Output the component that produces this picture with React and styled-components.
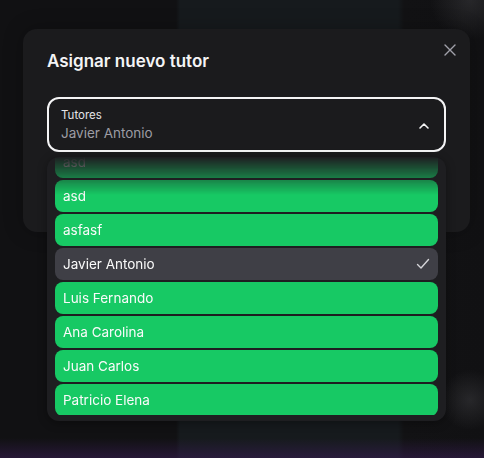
import React, { useEffect, useRef } from "react";
import styled, { createGlobalStyle } from "styled-components";

const Global = createGlobalStyle`
  html, body { margin: 0; padding: 0; }
  body {
    width: 484px; height: 458px; overflow: hidden;
    background: #111113;
    font-family: Inter, "Noto Sans", sans-serif;
    -webkit-font-smoothing: antialiased;
  }
  * { box-sizing: border-box; }
`;

const Page = styled.div`
  position: relative;
  width: 484px;
  height: 458px;
  overflow: hidden;
  background:
    radial-gradient(circle at 470px 400px, rgba(80,80,84,0.35) 0, rgba(80,80,84,0) 30px),
    radial-gradient(circle at 470px 0px, rgba(80,80,84,0.35) 0, rgba(80,80,84,0) 40px),
    linear-gradient(to bottom, rgba(0,0,0,0) 438px, rgba(60,30,90,0.5) 458px),
    linear-gradient(to right, #111113 0, #111113 176px, #161a1d 180px, #161a1d 398px, #121214 404px, #111113 100%);
  padding: 29px 14px 0 23px;
`;

const Modal = styled.div`
  width: 447px;
  height: 203px;
  background: #1b1b1d;
  border-radius: 14px;
  padding: 20px 24px 0 24px;
  position: relative;
  box-shadow: 0 0 20px rgba(0,0,0,0.25);
`;

const Title = styled.h2`
  margin: 0;
  font-size: 17px;
  font-weight: 600;
  color: #f4f4f5;
  line-height: 24px;
`;

const Close = styled.button`
  position: absolute;
  top: 9px;
  right: 8px;
  width: 24px;
  height: 24px;
  border: none;
  background: transparent;
  padding: 0;
  display: flex;
  align-items: center;
  justify-content: center;
  color: #a1a1aa;
`;

const Field = styled.div`
  margin-top: 24px;
  height: 55px;
  border: 2px solid #f4f4f5;
  border-radius: 12px;
  padding: 8px 12px 0 12px;
  display: flex;
  align-items: center;
  justify-content: space-between;
`;

const FieldText = styled.div`
  display: flex;
  flex-direction: column;
  align-self: flex-start;
`;

const Label = styled.span`
  font-size: 11.5px;
  line-height: 16px;
  color: #e4e4e7;
`;

const Value = styled.span`
  font-size: 13.5px;
  line-height: 20px;
  color: #9d9da4;
`;

const Chevron = styled.span`
  display: flex;
  color: #f4f4f5;
  margin-right: 2px;
  margin-top: -6px;
`;

const Popover = styled.div`
  position: absolute;
  left: 47px;
  top: 157px;
  width: 399px;
  height: 264px;
  background: #1e1e21;
  border-radius: 12px;
  box-shadow: 0 2px 10px rgba(0,0,0,0.35);
  padding: 0 8px 6px 8px;
  display: flex;
  flex-direction: column;
`;

const Scroller = styled.div`
  flex: 1;
  overflow: hidden;
  -webkit-mask-image: linear-gradient(to bottom, transparent 0, #000 38px);
  mask-image: linear-gradient(to bottom, transparent 0, #000 38px);
`;

const List = styled.ul`
  list-style: none;
  margin: 0;
  padding: 8px 0 0 0;
  display: flex;
  flex-direction: column;
  gap: 2px;
`;

const Item = styled.li`
  height: 32px;
  border-radius: 8px;
  background: ${(p) => (p.$selected ? "#3f3f46" : "#17c964")};
  color: #fafafa;
  font-size: 13.5px;
  padding: 0 8px;
  display: flex;
  align-items: center;
  justify-content: space-between;
`;

const Check = styled.span`
  display: flex;
  color: #d4d4d8;
`;

const names = ["asd", "asd", "asfasf", "Javier Antonio", "Luis Fernando", "Ana Carolina", "Juan Carlos", "Patricio Elena"];

export default function App() {
  const ref = useRef(null);
  useEffect(() => {
    if (ref.current) ref.current.scrollTop = 19;
  }, []);
  return (
    <>
      <Global />
      <Page>
        <Modal>
          <Close aria-label="Cerrar">
            <svg width="12" height="12" viewBox="0 0 12 12" fill="none" stroke="currentColor" strokeWidth="1.4" strokeLinecap="round">
              <path d="M1 1L11 11M11 1L1 11" />
            </svg>
          </Close>
          <Title>Asignar nuevo tutor</Title>
          <Field>
            <FieldText>
              <Label>Tutores</Label>
              <Value>Javier Antonio</Value>
            </FieldText>
            <Chevron>
              <svg width="12" height="8" viewBox="0 0 12 8" fill="none" stroke="currentColor" strokeWidth="1.6" strokeLinecap="round" strokeLinejoin="round">
                <path d="M2 6L6 2L10 6" />
              </svg>
            </Chevron>
          </Field>
        </Modal>
        <Popover>
          <Scroller ref={ref}>
            <List>
              {names.map((n, i) => (
                <Item key={i} $selected={n === "Javier Antonio"}>
                  {n}
                  {n === "Javier Antonio" && (
                    <Check>
                      <svg width="14" height="12" viewBox="0 0 14 12" fill="none" stroke="currentColor" strokeWidth="1.4" strokeLinecap="round" strokeLinejoin="round">
                        <path d="M1.5 6.5L5 10L12.5 1.5" />
                      </svg>
                    </Check>
                  )}
                </Item>
              ))}
            </List>
          </Scroller>
        </Popover>
      </Page>
    </>
  );
}
